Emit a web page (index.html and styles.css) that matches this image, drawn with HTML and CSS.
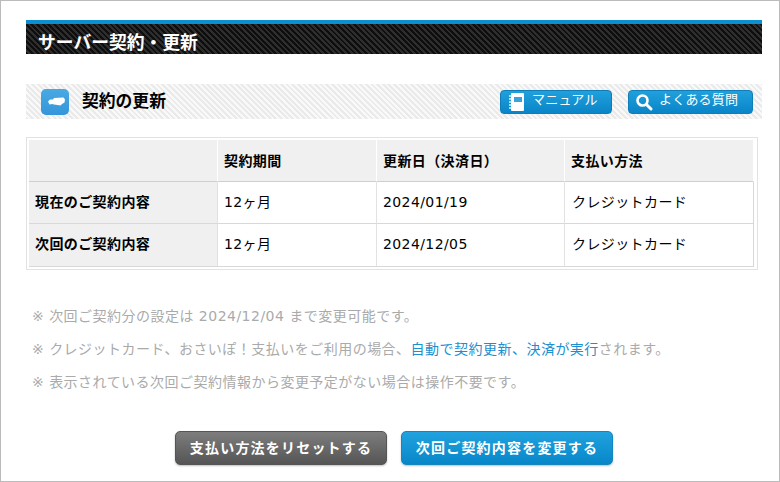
FILE: index.html
```html
<!DOCTYPE html>
<html lang="ja">
<head>
<meta charset="utf-8">
<title>サーバー契約・更新</title>
<link rel="stylesheet" href="styles.css">
</head>
<body>
<div class="frame">
  <h1 class="page-title">サーバー契約・更新</h1>
  <div class="section-bar">
    <div class="section-head">
      <span class="section-icon">
        <svg width="28" height="26" viewBox="0 0 28 26"><path d="M7 12.5 L9 10.5 L12 10.5 L13 9 L22.5 8.5 L24 10.5 L23.5 13.5 L21 15 L19.5 16.5 L16.5 16 L13 15.5 L11 15 L8.5 15.5 Z" fill="#fff"/></svg>
      </span>
      <h2 class="section-title">契約の更新</h2>
    </div>
    <div class="tools">
      <a class="tool tool-manual">
        <svg class="tool-icon" width="16" height="20" viewBox="0 0 16 20"><rect x="2" y="1" width="13" height="18" rx="1" fill="#fff"/><rect x="5" y="5" width="8" height="5" fill="#3aa3dd"/><path d="M0 4h3M0 7h3M0 10h3M0 13h3M0 16h3" stroke="#e4f3fb" stroke-width="1.4"/></svg>
        <span>マニュアル</span>
      </a>
      <a class="tool tool-faq">
        <svg class="tool-icon" width="18" height="18" viewBox="0 0 18 18"><circle cx="7.5" cy="7.5" r="5" fill="none" stroke="#fff" stroke-width="2.6"/><path d="M11.5 11.5L16 16" stroke="#fff" stroke-width="3" stroke-linecap="round"/></svg>
        <span>よくある質問</span>
      </a>
    </div>
  </div>
  <div class="table-wrap">
    <table class="contract">
      <thead>
        <tr><th class="c1"></th><th class="c2">契約期間</th><th class="c3">更新日（決済日）</th><th class="c4">支払い方法</th></tr>
      </thead>
      <tbody>
        <tr class="r1"><th>現在のご契約内容</th><td>12ヶ月</td><td>2024/01/19</td><td>クレジットカード</td></tr>
        <tr class="r2"><th>次回のご契約内容</th><td>12ヶ月</td><td>2024/12/05</td><td>クレジットカード</td></tr>
      </tbody>
    </table>
  </div>
  <ul class="notes">
    <li>※ 次回ご契約分の設定は 2024/12/04 まで変更可能です。</li>
    <li>※ クレジットカード、おさいぽ！支払いをご利用の場合、<em>自動で契約更新、決済が実行</em>されます。</li>
    <li>※ 表示されている次回ご契約情報から変更予定がない場合は操作不要です。</li>
  </ul>
  <div class="actions">
    <a class="btn btn-gray">支払い方法をリセットする</a>
    <a class="btn btn-blue">次回ご契約内容を変更する</a>
  </div>
</div>
</body>
</html>
```
FILE: styles.css
```css
* { box-sizing: border-box; }
html, body { margin: 0; padding: 0; background: #fff; }
body {
  width: 780px;
  height: 482px;
  overflow: hidden;
  font-family: "DejaVu Sans", "Noto Sans CJK JP", sans-serif;
  color: #000;
}
.frame {
  width: 780px;
  height: 482px;
  border: 1px solid #bbb;
  padding: 19px 0 0 25px;
}
.page-title {
  width: 736px;
  height: 34px;
  margin: 0;
  padding: 6px 0 0 12px;
  border-top: 4px solid #0a8fd0;
  font-size: 17.8px;
  line-height: 26px;
  font-weight: 700;
  color: #fff;
  background: repeating-linear-gradient(45deg, #0e0e0e 0 2px, #2e2e2e 2px 4px);
}
.section-bar {
  width: 736px;
  height: 35px;
  margin-top: 30px;
  display: flex;
  justify-content: space-between;
  align-items: center;
  background: repeating-linear-gradient(45deg, #eaeaea 0 2px, #f9f9f9 2px 4px);
}
.section-head { display: flex; align-items: center; padding-left: 15px; }
.section-icon {
  width: 28px;
  height: 26px;
  border-radius: 5px;
  background: linear-gradient(#4aa9e3, #3496da);
  display: block;
}
.section-icon svg { display: block; }
.section-title {
  margin: 0 0 2px 13px;
  font-size: 16.8px;
  line-height: 24px;
  font-weight: 700;
  color: #000;
}
.tools { display: flex; gap: 16px; padding-right: 9px; }
.tool {
  height: 24px;
  display: flex;
  align-items: center;
  border: 1px solid #0e7db8;
  border-radius: 4px;
  background: linear-gradient(#20a0dc, #0a85c8);
  color: #fff;
  font-size: 13px;
  line-height: 20px;
  letter-spacing: 0.2px;
}
.tool-manual { width: 112px; padding-left: 8px; }
.tool-faq { width: 125px; padding-left: 6px; }
.tool-manual span { margin: 0 0 3px 7px; }
.tool-faq span { margin: 0 0 3px 6px; }
.tool-icon { display: block; flex: none; }
.table-wrap {
  width: 732px;
  height: 133px;
  margin-top: 18px;
  border: 1px solid #e2e2e2;
  padding: 2px;
}
.contract {
  border-collapse: separate;
  border-spacing: 0;
  width: 725px;
  table-layout: fixed;
  font-size: 14px;
  line-height: 20px;
  letter-spacing: 0.4px;
}
.contract th, .contract td {
  padding: 0 0 2px 6px;
  text-align: left;
  border-bottom: 1px solid #d8d8d8;
  font-weight: 400;
  vertical-align: middle;
}
.contract thead th {
  height: 42px;
  background: #f0f0f0;
  font-weight: 700;
  border-bottom-color: #cfcfcf;
  border-left: 1px solid #fff;
  padding-bottom: 0;
}
.contract thead th:first-child { border-left: 0; }
.contract thead th:last-child { border-right: 1px solid #fff; }
.contract tbody th {
  background: #f0f0f0;
  font-weight: 700;
  padding-left: 6px;
}
.contract tbody td { border-left: 1px solid #e2e2e2; }
.contract tbody td:last-child { border-right: 1px solid #d8d8d8; padding-left: 7px; }
.contract .r1 { height: 42px; }
.contract .r2 { height: 43px; }
.c1 { width: 188px; }
.c2 { width: 159px; }
.c3 { width: 188px; }
.c4 { width: 190px; }
.notes {
  list-style: none;
  margin: 36px 0 0;
  padding: 0 0 0 6px;
  color: #aaa;
  font-size: 14px;
  line-height: 20px;
  letter-spacing: 0.48px;
}
.notes li + li { margin-top: 13px; }
.notes em { font-style: normal; color: #1b8fcf; }
.actions {
  display: flex;
  justify-content: center;
  gap: 14px;
  width: 736px;
  margin-top: 39px;
}
.btn {
  height: 34px;
  display: flex;
  align-items: center;
  justify-content: center;
  padding-bottom: 3px;
  border-radius: 5px;
  color: #fff;
  font-weight: 700;
  font-size: 14px;
  letter-spacing: 1.2px;
  box-shadow: 0 1px 2px rgba(0,0,0,.25);
}
.btn-gray {
  width: 212px;
  border: 1px solid #555;
  background: linear-gradient(#7d7d7d, #555);
}
.btn-blue {
  width: 212px;
  border: 1px solid #1585c0;
  background: linear-gradient(#21a2de, #0787c9);
}
```
